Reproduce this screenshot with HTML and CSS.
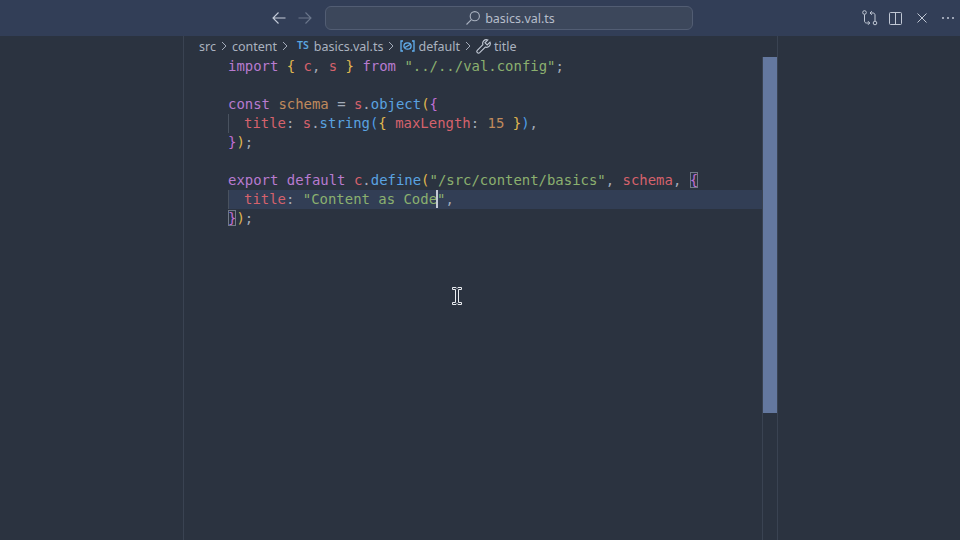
FILE: index.html
```html
<!DOCTYPE html>
<html lang="en">
<head>
<meta charset="utf-8">
<title>basics.val.ts</title>
<link rel="stylesheet" href="styles.css">
</head>
<body>
<div class="window">
  <header class="titlebar">
    <div class="nav">
      <svg class="nav-icon" width="16" height="16" viewBox="0 0 16 16"><path d="M14.5 8H2M7.5 2.5 2 8l5.5 5.5" fill="none" stroke="#c5ccd9" stroke-width="1.1"/></svg>
      <svg class="nav-icon" width="16" height="16" viewBox="0 0 16 16"><path d="M1.5 8H14M8.5 2.5 14 8l-5.5 5.5" fill="none" stroke="#6c778c" stroke-width="1.1"/></svg>
    </div>
    <div class="search">
      <svg width="16" height="16" viewBox="0 0 16 16"><circle cx="9.8" cy="6.2" r="4.6" fill="none" stroke="#aab2c0" stroke-width="1.1"/><path d="M6.4 9.6 1.5 14.5" stroke="#aab2c0" stroke-width="1.1"/></svg>
      <span>basics.val.ts</span>
    </div>
    <div class="actions">
      <svg width="16" height="16" viewBox="0 0 16 16" fill="none" stroke="#c0c7d4" stroke-width="1"><circle cx="2.5" cy="2.5" r="1.8"/><circle cx="13" cy="13" r="1.8"/><path d="M2.5 4.5V11c0 1.2.8 2 2 2h3M6 11.2 7.8 13 6 14.8M13 11V5c0-1.2-.8-2-2-2H8M9.8 1.2 8 3l1.8 1.8"/></svg>
      <svg width="16" height="16" viewBox="0 0 16 16" fill="none" stroke="#c0c7d4" stroke-width="1"><rect x="1.5" y="2.5" width="12" height="12" rx="1"/><path d="M7.5 2.5v12"/></svg>
      <svg width="16" height="16" viewBox="0 0 16 16" fill="none" stroke="#c0c7d4" stroke-width="1"><path d="M3.5 3.5l9 9M12.5 3.5l-9 9"/></svg>
      <svg width="16" height="16" viewBox="0 0 16 16" fill="#c0c7d4"><circle cx="3" cy="8" r="1"/><circle cx="8" cy="8" r="1"/><circle cx="13" cy="8" r="1"/></svg>
    </div>
  </header>
  <div class="workbench">
    <aside class="sidebar"></aside>
    <main class="editor">
      <nav class="breadcrumbs">
        <span>src</span>
        <svg class="chev" width="6" height="10" viewBox="0 0 6 10"><path d="M1 1l4 4-4 4" fill="none" stroke="#a3abb9"/></svg>
        <span>content</span>
        <svg class="chev" width="6" height="10" viewBox="0 0 6 10"><path d="M1 1l4 4-4 4" fill="none" stroke="#a3abb9"/></svg>
        <span class="ts">TS</span>
        <span>basics.val.ts</span>
        <svg class="chev" width="6" height="10" viewBox="0 0 6 10"><path d="M1 1l4 4-4 4" fill="none" stroke="#a3abb9"/></svg>
        <svg class="sym sym-var" width="15" height="14" viewBox="0 0 15 14" fill="none" stroke="#62b0f0" stroke-width="1.3"><path d="M3 2H1v10h2M12 2h2v10h-2"/><ellipse cx="7.5" cy="7" rx="3.6" ry="3.2"/><path d="M5 8.5 10 5.5"/></svg>
        <span>default</span>
        <svg class="chev" width="6" height="10" viewBox="0 0 6 10"><path d="M1 1l4 4-4 4" fill="none" stroke="#a3abb9"/></svg>
        <svg class="sym sym-tool" width="15" height="15" viewBox="0 0 15 15" fill="none" stroke="#c3cad6" stroke-width="1.1"><path d="M14 3.2 11.2 6 9 3.8 11.8 1a3.7 3.7 0 0 0-4.9 4.7L1.3 11.3a1.7 1.7 0 0 0 2.4 2.4l5.6-5.6A3.7 3.7 0 0 0 14 3.2z"/></svg>
        <span>title</span>
      </nav>
      <div class="scroll-row">
        <div class="code">
          <div class="line"><span class="kw">import</span> <span class="y">{</span> <span class="v">c</span><span class="p">,</span> <span class="v">s</span> <span class="y">}</span> <span class="kw">from</span> <span class="str">"../../val.config"</span><span class="p">;</span></div>
          <div class="line"></div>
          <div class="line"><span class="kw">const</span> <span class="t">schema</span> <span class="p">=</span> <span class="v">s</span><span class="p">.</span><span class="fn">object</span><span class="y">(</span><span class="m">{</span></div>
          <div class="line guided"><span class="v">title</span><span class="p">:</span> <span class="v">s</span><span class="p">.</span><span class="fn">string</span><span class="b">(</span><span class="y">{</span> <span class="v">maxLength</span><span class="p">:</span> <span class="t">15</span> <span class="y">}</span><span class="b">)</span><span class="p">,</span></div>
          <div class="line"><span class="m">}</span><span class="y">)</span><span class="p">;</span></div>
          <div class="line"></div>
          <div class="line"><span class="kw">export</span> <span class="kw">default</span> <span class="v">c</span><span class="p">.</span><span class="fn">define</span><span class="y">(</span><span class="str">"/src/content/basics"</span><span class="p">,</span> <span class="v">schema</span><span class="p">,</span> <span class="m match">{</span></div>
          <div class="line guided current"><span class="v">title</span><span class="p">:</span> <span class="str">"Content as Code<span class="caret"></span>"</span><span class="p">,</span></div>
          <div class="line"><span class="m match">}</span><span class="y">)</span><span class="p">;</span></div>
        </div>
        <div class="scrollbar"><div class="thumb"></div></div>
      </div>
    </main>
    <aside class="panel"></aside>
  </div>
  <svg class="ibeam" width="12" height="20" viewBox="0 0 12 20"><path d="M1.5 1.5h3.5l1 1 1-1h3.5v2H7.5v13h3v2H7l-1-1-1 1H1.5v-2h3v-13h-3z" fill="#2b3341" stroke="#e8ebef" stroke-width="1"/></svg>
</div>
</body>
</html>
```
FILE: styles.css
```css
* { box-sizing: border-box; }
html, body { margin: 0; height: 100%; overflow: hidden; }
body { background: #2b3340; color: #bcc3cf; font-family: "Noto Sans", sans-serif; }
.window { position: relative; width: 960px; height: 540px; display: flex; flex-direction: column; }

.titlebar { height: 36px; flex: none; background: #323e57; display: flex; align-items: center; padding-left: 271px; padding-right: 4px; }
.nav { display: flex; gap: 10px; width: 54px; flex: none; }
.search { width: 368px; height: 24px; border: 1px solid #525d73; border-radius: 6px; background: #3c475b; display: flex; align-items: center; justify-content: center; gap: 4px; font-size: 12.5px; color: #b6bdca; padding-left: 2px; }
.actions { margin-left: auto; display: flex; align-items: center; gap: 10px; }

.workbench { flex: 1; display: flex; min-height: 0; }
.sidebar { width: 184px; flex: none; border-right: 1px solid #3a4352; }
.editor { flex: 1; min-width: 0; display: flex; flex-direction: column; }
.panel { width: 183px; flex: none; border-left: 1px solid #3a4352; }

.breadcrumbs { height: 21px; flex: none; display: flex; align-items: center; gap: 5px; padding: 0 0 1px 15px; font-size: 12.5px; color: #aab2bf; }
.breadcrumbs .ts { font-size: 10.5px; font-weight: 600; color: #5aa7e0; margin: 0 0 2px 4px; }
.breadcrumbs .sym { margin-right: -2px; flex: none; }
.breadcrumbs .sym-var { margin-left: 1px; }
.breadcrumbs .sym-tool { margin-left: 0; }
.chev { flex: none; }

.scroll-row { flex: 1; display: flex; min-height: 0; }
.code { flex: 1; min-width: 0; padding-left: 44px; font-family: "DejaVu Sans Mono", monospace; font-size: 13.95px; line-height: 19px; color: #b5bcc9; }
.line { height: 19px; white-space: pre; }
.guided { padding-left: 16px; box-shadow: inset 1px 0 0 #49525f; }
.current { background: #323e55; }
.kw { color: #b87bd0; }
.v { color: #d6626c; }
.t { color: #c08a5c; }
.fn { color: #5aa3e0; }
.str { color: #8bb06f; }
.p { color: #a3abb8; }
.y { color: #e0b84f; }
.m { color: #c06fd6; }
.b { color: #4f9fe8; }
.match { outline: 1px solid #717a88; outline-offset: -1px; }
.caret { display: inline-block; width: 2px; height: 18px; margin: 0 -1px; background: #c3cad6; vertical-align: -4px; }

.scrollbar { width: 15px; flex: none; border-left: 1px solid #3a4352; }
.thumb { height: 356px; background: #64789f; }

.ibeam { position: absolute; left: 451px; top: 286px; }
```
